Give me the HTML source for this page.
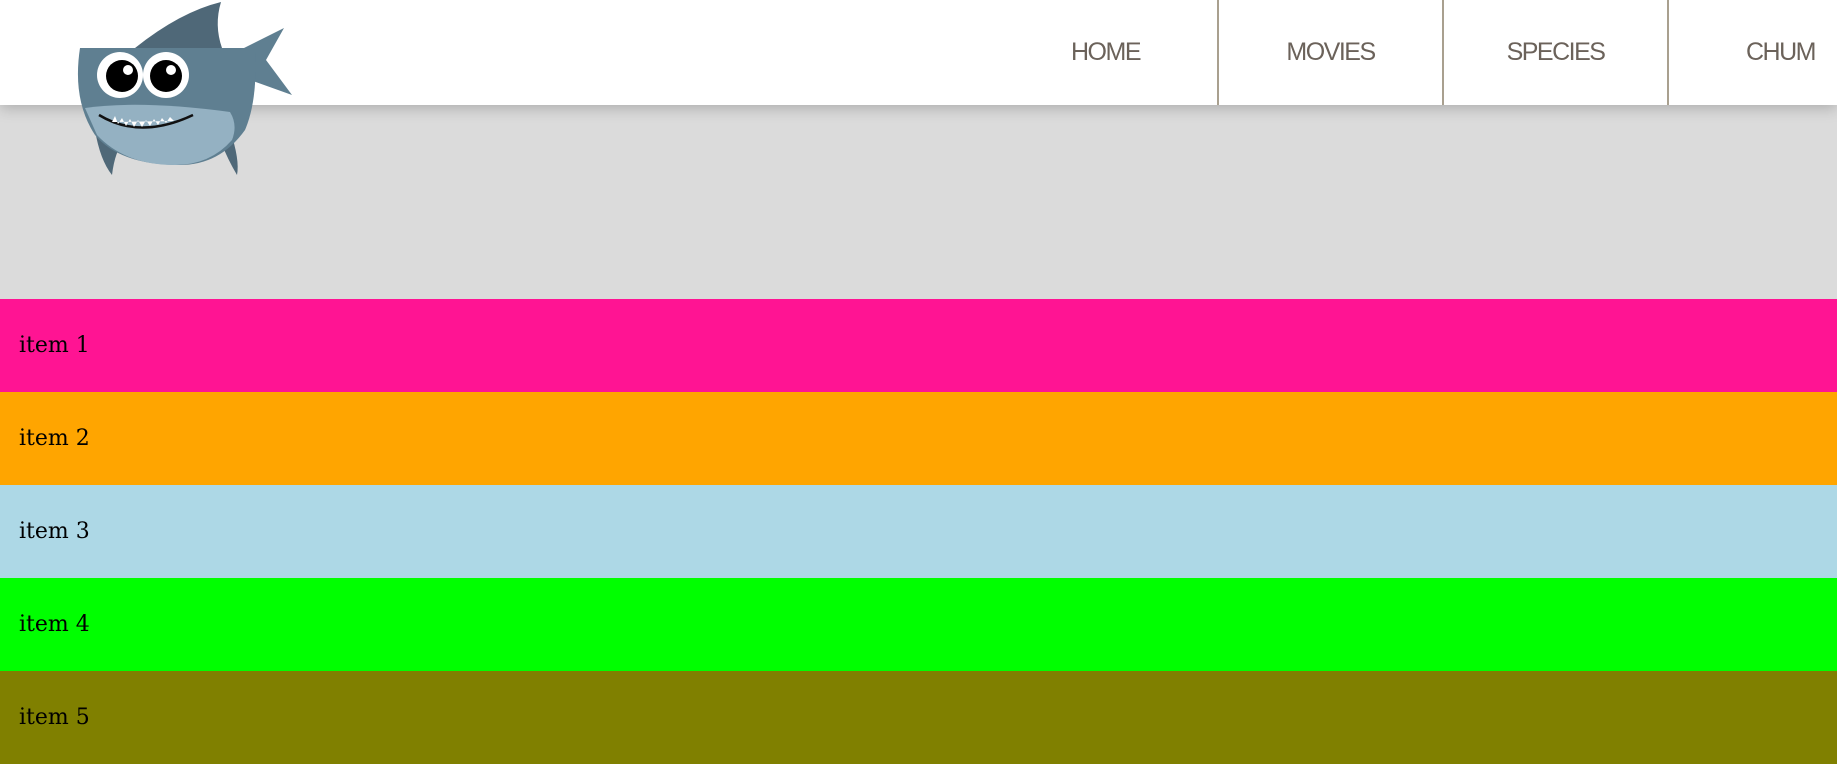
<!DOCTYPE html>
<html><head><style>
*{margin:0;padding:0;box-sizing:border-box}
body{width:1837px;height:748px;overflow:hidden;background:#dbdbdb;position:relative;font-family:"Liberation Sans",sans-serif}
header{position:absolute;left:0;top:0;width:1837px;height:105px;background:#fff;box-shadow:0 3px 14px rgba(0,0,0,.22);z-index:1}
.nav a{position:absolute;top:0;height:105px;width:225px;text-align:center;line-height:104px;font-size:25px;letter-spacing:-1.5px;color:#6b625a;text-decoration:none}
.div{position:absolute;top:0;width:2px;height:105px;background:#a9a08f}
.item{position:absolute;left:0;width:1837px;height:93px;font-family:"DejaVu Serif","Liberation Serif",serif;font-size:22px;padding-left:19px;line-height:93px;color:#000}
svg{position:absolute;left:0;top:0;z-index:2}
</style></head><body>
<header>
<div class="nav">
<a style="left:993px">HOME</a>
<div class="div" style="left:1217px"></div>
<a style="left:1218px">MOVIES</a>
<div class="div" style="left:1442px"></div>
<a style="left:1443px">SPECIES</a>
<div class="div" style="left:1667px"></div>
<a style="left:1668px">CHUM</a>
</div>
</header>
<div class="item" style="top:299px;background:#ff1493">item 1</div>
<div class="item" style="top:392px;background:#ffa500">item 2</div>
<div class="item" style="top:485px;background:#add8e6">item 3</div>
<div class="item" style="top:578px;background:#00ff00">item 4</div>
<div class="item" style="top:671px;background:#808000">item 5</div>
<svg width="320" height="200" viewBox="0 0 320 200">
<path d="M135 48 Q180 12 221 2 Q214 25 222 48 Z" fill="#4f6878"/>
<path d="M240 50 L284 28 L266 60 L292 95 L250 80 Z" fill="#5f7f91"/>
<path d="M95 130 Q100 160 112 175 Q115 150 125 140 Z" fill="#4f6878"/>
<path d="M230 130 Q240 160 237 175 Q228 160 220 140 Z" fill="#4f6878"/>
<path d="M80 48 L255 48 Q258 100 245 130 Q220 165 180 165 Q120 165 95 135 Q72 100 80 48 Z" fill="#5f7f91"/>
<path d="M85 108 Q140 100 230 112 Q238 125 232 140 Q210 165 175 165 Q125 165 97 135 Z" fill="#94b1c2"/>
<path d="M99 115 Q140 140 193 115" fill="none" stroke="#111" stroke-width="2.5"/>
<path d="M112 122 L115 116 L118 124 L122 118 L126 126 L130 119 L134 127 L138 120 L142 127 L146 120 L150 126 L154 119 L158 125 L162 118 L166 123 L170 117 L174 121 Z" fill="#fff"/>
<circle cx="120" cy="75" r="23" fill="#fff"/><circle cx="166" cy="75" r="23" fill="#fff"/>
<circle cx="122" cy="76" r="16" fill="#000"/><circle cx="166" cy="76" r="16" fill="#000"/>
<circle cx="128" cy="70" r="5" fill="#fff"/><circle cx="171" cy="70" r="5" fill="#fff"/>
</svg>
</body></html>
